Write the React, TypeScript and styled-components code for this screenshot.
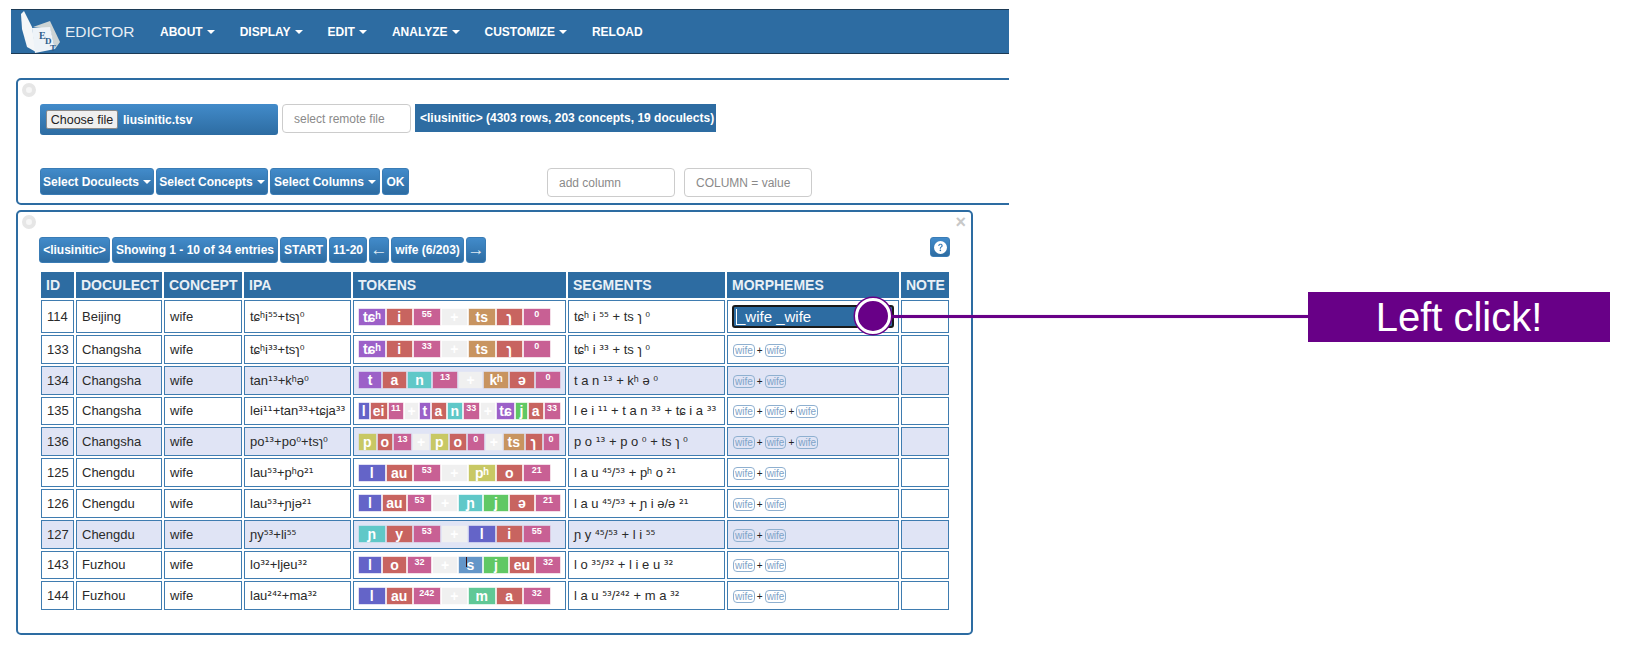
import { FC, ReactNode } from "react"
import styled, { createGlobalStyle } from "styled-components"
import { BsQuestionCircleFill } from "react-icons/bs"

const blue = "#2d6ca2"

const GlobalStyle = createGlobalStyle`
	html,
	body {
		margin: 0;
		background: #fff;
	}
	body {
		font-family: "Liberation Sans", "DejaVu Sans", sans-serif;
		font-size: 13px;
		color: #333;
	}
	* {
		box-sizing: border-box;
	}
`

const Stage = styled.div`
	position: relative;
	width: 1637px;
	height: 653px;
	overflow: hidden;
`

const Clip = styled.div`
	width: 1009px;
	height: 653px;
	padding: 9px 0 0 11px;
	overflow: hidden;
`

const Nav = styled.nav`
	display: flex;
	align-items: center;
	width: 998px;
	height: 45px;
	padding-left: 8px;
	background: ${blue};
	border-top: 1px solid #1c3a55;
	border-bottom: 1px solid #1c3a55;
`

const Brand = styled.div`
	display: flex;
	align-items: center;
	width: 129px;
	color: #e6edf4;
	font-size: 15.5px;
`

const LogoMark = styled.svg`
	flex: none;
	width: 42px;
	height: 43px;
	margin-right: 4px;
`

const NavItem = styled.a`
	display: flex;
	align-items: center;
	padding: 0 13px 0 12px;
	color: #fff;
	font-size: 12px;
	font-weight: bold;
`

const Caret = styled.span`
	display: inline-block;
	margin-left: 4px;
	border-top: 4px solid currentColor;
	border-left: 4px solid transparent;
	border-right: 4px solid transparent;
`

const Panel = styled.section<{ $width: number; $height: number }>`
	position: relative;
	width: ${(p) => p.$width}px;
	height: ${(p) => p.$height}px;
	margin-left: 5px;
	border: 2px solid ${blue};
	border-radius: 5px;
`

const FilePanel = styled(Panel)`
	display: flex;
	flex-direction: column;
	justify-content: space-between;
	margin-top: 24px;
	padding: 24px 0 6px 22px;
`

const TablePanel = styled(Panel)`
	margin-top: 5px;
	padding: 25px 0 0 21px;
`

const Dot = styled.span`
	position: absolute;
	left: 4px;
	top: 3px;
	width: 14px;
	height: 14px;
	border: 4px solid #e6e6e6;
	border-radius: 50%;
	background: #f6f6f6;
`

const Close = styled.span`
	position: absolute;
	right: 5px;
	top: 1px;
	color: #c8c8c8;
	font-size: 18px;
	font-weight: bold;
	line-height: 18px;
`

const Row = styled.div`
	display: flex;
	align-items: flex-start;
`

const gradient = `linear-gradient(to bottom, #428bca, ${blue})`

const FileBox = styled.div`
	display: flex;
	align-items: center;
	width: 238px;
	height: 31px;
	padding-left: 6px;
	border-radius: 3px;
	background: ${gradient};
	color: #fff;
	font-size: 12px;
	font-weight: bold;
`

const ChooseButton = styled.button`
	width: 72px;
	height: 19px;
	margin-right: 5px;
	padding: 0;
	border: 1px solid #8a8a8a;
	border-radius: 2px;
	background: #efefef;
	color: #222;
	font-family: inherit;
	font-size: 12.5px;
`

const TextBox = styled.div<{ $width: number; $left: number }>`
	display: flex;
	align-items: center;
	width: ${(p) => p.$width}px;
	height: 29px;
	margin-left: ${(p) => p.$left}px;
	padding-left: 11px;
	border: 1px solid #ccc;
	border-radius: 4px;
	background: #fff;
	color: #8a8a8a;
	font-size: 12px;
`

const InfoLabel = styled.div`
	display: flex;
	align-items: center;
	width: 301px;
	height: 28px;
	margin-left: 4px;
	padding-left: 5px;
	background: ${blue};
	color: #fff;
	font-size: 12px;
	font-weight: bold;
	white-space: nowrap;
`

const BlueButton = styled.button<{ $width: number; $height?: number }>`
	display: flex;
	align-items: center;
	justify-content: center;
	flex: none;
	width: ${(p) => p.$width}px;
	height: ${(p) => p.$height ?? 27}px;
	margin-right: 2px;
	padding: 0;
	border: 1px solid #3a7cb5;
	border-radius: 3px;
	background: ${gradient};
	color: #fff;
	font-family: inherit;
	font-size: 12px;
	font-weight: bold;
	white-space: nowrap;
`

const ArrowButton = styled(BlueButton)`
	font-size: 17px;
	font-weight: normal;
	color: #dfe9f2;
`

const HelpButton = styled(BlueButton)`
	margin-left: 442px;
	margin-right: 0;
	font-size: 13px;
`

const Grid = styled.table`
	width: 912px;
	margin: 7px 0 0 0;
	border-collapse: separate;
	border-spacing: 2px;
	table-layout: fixed;
`

const Head = styled.th`
	height: 26px;
	padding: 0 5px;
	background: ${blue};
	color: #e9f0f6;
	font-size: 14px;
	font-weight: bold;
	text-align: left;
	white-space: nowrap;
	overflow: hidden;
`

const Cell = styled.td<{ $shade: boolean; $first: boolean }>`
	height: ${(p) => (p.$first ? 33 : 28.8)}px;
	padding: 0 5px;
	border: 1px solid #3f7cb0;
	background: ${(p) => (p.$shade ? "#e0e4f5" : "#fff")};
	color: #2a2a2a;
	font-size: 13px;
	white-space: nowrap;
`

const Tone = styled.span`
	font-family: "DejaVu Sans", sans-serif;
	font-size: 12px;
`

const TokenStrip = styled.div`
	display: flex;
	gap: 2px;
`

const tokenColors = {
	purple: "#9c60c8",
	red: "#c86460",
	pink: "#c86094",
	plain: "#f0f0f0",
	tan: "#c89460",
	teal: "#60c8c8",
	indigo: "#6464c8",
	olive: "#c8c864",
	green: "#60c864",
	sky: "#6496c8",
	mint: "#60c896",
}

type TokenKind = keyof typeof tokenColors

const Token = styled.span<{ $kind: TokenKind; $w: number }>`
	display: flex;
	justify-content: center;
	align-items: ${(p) => (p.$kind === "pink" ? "flex-start" : "center")};
	width: ${(p) => p.$w}px;
	height: 16px;
	background: ${(p) => tokenColors[p.$kind]};
	color: #fff;
	font-size: ${(p) => (p.$kind === "pink" ? 9 : 14)}px;
	font-weight: bold;
	line-height: ${(p) => (p.$kind === "pink" ? 11 : 16)}px;
	box-shadow: 0 0 0 0.5px ${(p) => tokenColors[p.$kind]}66;
`

const Morpheme = styled.span`
	display: inline-block;
	padding: 0 1px;
	border: 1px solid #8fb0d0;
	border-radius: 4px;
	color: #7ea3c8;
	font-size: 10px;
	line-height: 11px;
`

const MorphemeJoin = styled.span`
	margin: 0 2px;
	color: #222;
	font-size: 10px;
`

const EditBox = styled.div`
	display: flex;
	align-items: center;
	height: 23px;
	margin: 0 -1px;
	padding-left: 2px;
	border: 2px solid #1a1a1a;
	border-radius: 3px;
	background: ${blue};
	color: #fff;
	font-size: 15px;
`

const TextCaret = styled.span`
	width: 1px;
	height: 16px;
	background: #fff;
`

const CallLine = styled.div`
	position: absolute;
	left: 891px;
	top: 315px;
	width: 418px;
	height: 3px;
	background: #680087;
	box-shadow: 0 0 1px #a070b8;
`

const CallDot = styled.div`
	position: absolute;
	left: 855px;
	top: 298px;
	width: 36px;
	height: 36px;
	border: 3px solid #fff;
	border-radius: 50%;
	background: #680087;
	box-shadow: 0 0 0 1.5px #680087;
`

const CallLabel = styled.div`
	position: absolute;
	left: 1308px;
	top: 292px;
	display: flex;
	align-items: center;
	justify-content: center;
	width: 302px;
	height: 50px;
	background: #680087;
	color: #fff;
	font-size: 40px;
`

const MouseBeam = styled.div`
	position: absolute;
	left: 466px;
	top: 557px;
	width: 1px;
	height: 10px;
	background: #3a1010;
`

const Logo: FC = () => (
	<LogoMark viewBox="0 0 42 43">
		<polygon points="14,17 31,11 41,32 36,39 31,19" fill="#cdd4d4" />
		<polygon points="2,4 5,1 13,17 17,42 8,37 3,19" fill="#f4f6f8" />
		<polygon points="13,18 31,17 36,39 16,43" fill="#eef3f8" />
		<text x="20" y="29" fontSize="10" fontFamily="Liberation Serif" fontWeight="bold" fill="#2d5c8a">
			E
		</text>
		<text x="26" y="34" fontSize="9" fontFamily="Liberation Serif" fontWeight="bold" fill="#2d5c8a">
			D
		</text>
		<text x="31" y="41" fontSize="9" fontFamily="Liberation Serif" fontWeight="bold" fill="#2d5c8a">
			T
		</text>
	</LogoMark>
)

const menu: [string, boolean][] = [
	["ABOUT", true],
	["DISPLAY", true],
	["EDIT", true],
	["ANALYZE", true],
	["CUSTOMIZE", true],
	["RELOAD", false],
]

const columns: [string, number][] = [
	["ID", 33],
	["DOCULECT", 86],
	["CONCEPT", 78],
	["IPA", 107],
	["TOKENS", 213],
	["SEGMENTS", 157],
	["MORPHEMES", 172],
	["NOTE", 48],
]

type Entry = {
	id: number
	doculect: string
	ipa: string
	segments: string
	shade?: boolean
	morphemes: number
	tokens: [string, TokenKind][]
	widths: number[]
}

const seven = [25.5, 25.5, 25.5, 25.5, 25.5, 25.5, 25.5]
const eight = [22, 23, 23, 24, 23, 24, 24, 24]

const entries: Entry[] = [
	{
		id: 114,
		doculect: "Beijing",
		ipa: "tɕʰi⁵⁵+tsɿ⁰",
		segments: "tɕʰ i ⁵⁵ + ts ɿ ⁰",
		morphemes: 0,
		tokens: [["tɕʰ", "purple"], ["i", "red"], ["55", "pink"], ["+", "plain"], ["ts", "tan"], ["ɿ", "red"], ["0", "pink"]],
		widths: seven,
	},
	{
		id: 133,
		doculect: "Changsha",
		ipa: "tɕʰi³³+tsɿ⁰",
		segments: "tɕʰ i ³³ + ts ɿ ⁰",
		morphemes: 2,
		tokens: [["tɕʰ", "purple"], ["i", "red"], ["33", "pink"], ["+", "plain"], ["ts", "tan"], ["ɿ", "red"], ["0", "pink"]],
		widths: seven,
	},
	{
		id: 134,
		doculect: "Changsha",
		ipa: "tan¹³+kʰə⁰",
		segments: "t a n ¹³ + kʰ ə ⁰",
		shade: true,
		morphemes: 2,
		tokens: [["t", "purple"], ["a", "red"], ["n", "teal"], ["13", "pink"], ["+", "plain"], ["kʰ", "tan"], ["ə", "red"], ["0", "pink"]],
		widths: eight,
	},
	{
		id: 135,
		doculect: "Changsha",
		ipa: "lei¹¹+tan³³+tɕja³³",
		segments: "l e i ¹¹ + t a n ³³ + tɕ i a ³³",
		morphemes: 3,
		tokens: [["l", "indigo"], ["ei", "red"], ["11", "pink"], ["+", "plain"], ["t", "purple"], ["a", "red"], ["n", "teal"], ["33", "pink"], ["+", "plain"], ["tɕ", "purple"], ["j", "green"], ["a", "red"], ["33", "pink"]],
		widths: [9.5, 16, 14.5, 13, 9.5, 14, 14.5, 14.5, 14.5, 17, 11, 13.5, 15],
	},
	{
		id: 136,
		doculect: "Changsha",
		ipa: "po¹³+po⁰+tsɿ⁰",
		segments: "p o ¹³ + p o ⁰ + ts ɿ ⁰",
		shade: true,
		morphemes: 3,
		tokens: [["p", "olive"], ["o", "red"], ["13", "pink"], ["+", "plain"], ["p", "olive"], ["o", "red"], ["0", "pink"], ["+", "plain"], ["ts", "tan"], ["ɿ", "red"], ["0", "pink"]],
		widths: [16.5, 14.5, 17, 16, 16.5, 16.5, 15.5, 16.5, 19.5, 16, 15],
	},
	{
		id: 125,
		doculect: "Chengdu",
		ipa: "lau⁵³+pʰo²¹",
		segments: "l a u ⁴⁵/⁵³ + pʰ o ²¹",
		morphemes: 2,
		tokens: [["l", "indigo"], ["au", "red"], ["53", "pink"], ["+", "plain"], ["pʰ", "olive"], ["o", "red"], ["21", "pink"]],
		widths: seven,
	},
	{
		id: 126,
		doculect: "Chengdu",
		ipa: "lau⁵³+ɲjə²¹",
		segments: "l a u ⁴⁵/⁵³ + ɲ i ə/ə ²¹",
		morphemes: 2,
		tokens: [["l", "indigo"], ["au", "red"], ["53", "pink"], ["+", "plain"], ["ɲ", "teal"], ["j", "green"], ["ə", "red"], ["21", "pink"]],
		widths: eight,
	},
	{
		id: 127,
		doculect: "Chengdu",
		ipa: "ɲy⁵³+li⁵⁵",
		segments: "ɲ y ⁴⁵/⁵³ + l i ⁵⁵",
		shade: true,
		morphemes: 2,
		tokens: [["ɲ", "teal"], ["y", "red"], ["53", "pink"], ["+", "plain"], ["l", "indigo"], ["i", "red"], ["55", "pink"]],
		widths: seven,
	},
	{
		id: 143,
		doculect: "Fuzhou",
		ipa: "lo³²+ljeu³²",
		segments: "l o ³⁵/³² + l i e u ³²",
		morphemes: 2,
		tokens: [["l", "indigo"], ["o", "red"], ["32", "pink"], ["+", "plain"], ["s", "sky"], ["j", "green"], ["eu", "red"], ["32", "pink"]],
		widths: eight,
	},
	{
		id: 144,
		doculect: "Fuzhou",
		ipa: "lau²⁴²+ma³²",
		segments: "l a u ⁵³/²⁴² + m a ³²",
		morphemes: 2,
		tokens: [["l", "indigo"], ["au", "red"], ["242", "pink"], ["+", "plain"], ["m", "mint"], ["a", "red"], ["32", "pink"]],
		widths: seven,
	},
]

// superscript digits come from mixed fonts otherwise, keep them in one face
const withTones = (text: string): ReactNode[] =>
	text.split(/([⁰¹²³⁴⁵⁶⁷⁸⁹]+)/).map((part, i) => (i % 2 ? <Tone key={i}>{part}</Tone> : part))

const MorphemeList: FC<{ count: number }> = ({ count }) => {
	if (count === 0) {
		return (
			<EditBox>
				<TextCaret />
				_wife _wife
			</EditBox>
		)
	}
	return (
		<>
			{Array.from({ length: count }, (_, i) => (
				<span key={i}>
					{i > 0 && <MorphemeJoin>+</MorphemeJoin>}
					<Morpheme>wife</Morpheme>
				</span>
			))}
		</>
	)
}

const App: FC = () => (
	<Stage>
		<GlobalStyle />
		<Clip>
			<Nav>
				<Brand>
					<Logo />
					EDICTOR
				</Brand>
				{menu.map(([label, caret]) => (
					<NavItem key={label}>
						{label}
						{caret && <Caret />}
					</NavItem>
				))}
			</Nav>

			<FilePanel $width={1100} $height={127}>
				<Dot />
				<Row>
					<FileBox>
						<ChooseButton>Choose file</ChooseButton>
						liusinitic.tsv
					</FileBox>
					<TextBox $width={129} $left={4}>select remote file</TextBox>
					<InfoLabel>&lt;liusinitic&gt; (4303 rows, 203 concepts, 19 doculects)</InfoLabel>
				</Row>
				<Row>
					<BlueButton $width={114}>Select Doculects<Caret /></BlueButton>
					<BlueButton $width={112}>Select Concepts<Caret /></BlueButton>
					<BlueButton $width={110}>Select Columns<Caret /></BlueButton>
					<BlueButton $width={27}>OK</BlueButton>
					<TextBox $width={128} $left={136}>add column</TextBox>
					<TextBox $width={128} $left={9}>COLUMN = value</TextBox>
				</Row>
			</FilePanel>

			<TablePanel $width={957} $height={425}>
				<Dot />
				<Close>×</Close>
				<Row>
					<BlueButton $width={71} $height={26}>&lt;liusinitic&gt;</BlueButton>
					<BlueButton $width={166} $height={26}>Showing 1 - 10 of 34 entries</BlueButton>
					<BlueButton $width={47} $height={26}>START</BlueButton>
					<BlueButton $width={38} $height={26}>11-20</BlueButton>
					<ArrowButton $width={20} $height={26}>←</ArrowButton>
					<BlueButton $width={73} $height={26}>wife (6/203)</BlueButton>
					<ArrowButton $width={20} $height={26}>→</ArrowButton>
					<HelpButton $width={20} $height={20}>
						<BsQuestionCircleFill />
					</HelpButton>
				</Row>
				<Grid>
					<colgroup>
						{columns.map(([label, width]) => (
							<col key={label} style={{ width }} />
						))}
					</colgroup>
					<thead>
						<tr>
							{columns.map(([label]) => (
								<Head key={label}>{label}</Head>
							))}
						</tr>
					</thead>
					<tbody>
						{entries.map((e, i) => {
							const cell = { $shade: !!e.shade, $first: i === 0 }
							return (
								<tr key={e.id}>
									<Cell {...cell}>{e.id}</Cell>
									<Cell {...cell}>{e.doculect}</Cell>
									<Cell {...cell}>wife</Cell>
									<Cell {...cell}>{withTones(e.ipa)}</Cell>
									<Cell {...cell}>
										<TokenStrip>
											{e.tokens.map(([text, kind], t) => (
												<Token key={t} $kind={kind} $w={e.widths[t]}>
													{text}
												</Token>
											))}
										</TokenStrip>
									</Cell>
									<Cell {...cell}>{withTones(e.segments)}</Cell>
									<Cell {...cell}>
										<MorphemeList count={e.morphemes} />
									</Cell>
									<Cell {...cell} />
								</tr>
							)
						})}
					</tbody>
				</Grid>
			</TablePanel>
		</Clip>
		<MouseBeam />
		<CallLine />
		<CallDot />
		<CallLabel>Left click!</CallLabel>
	</Stage>
)

export default App
